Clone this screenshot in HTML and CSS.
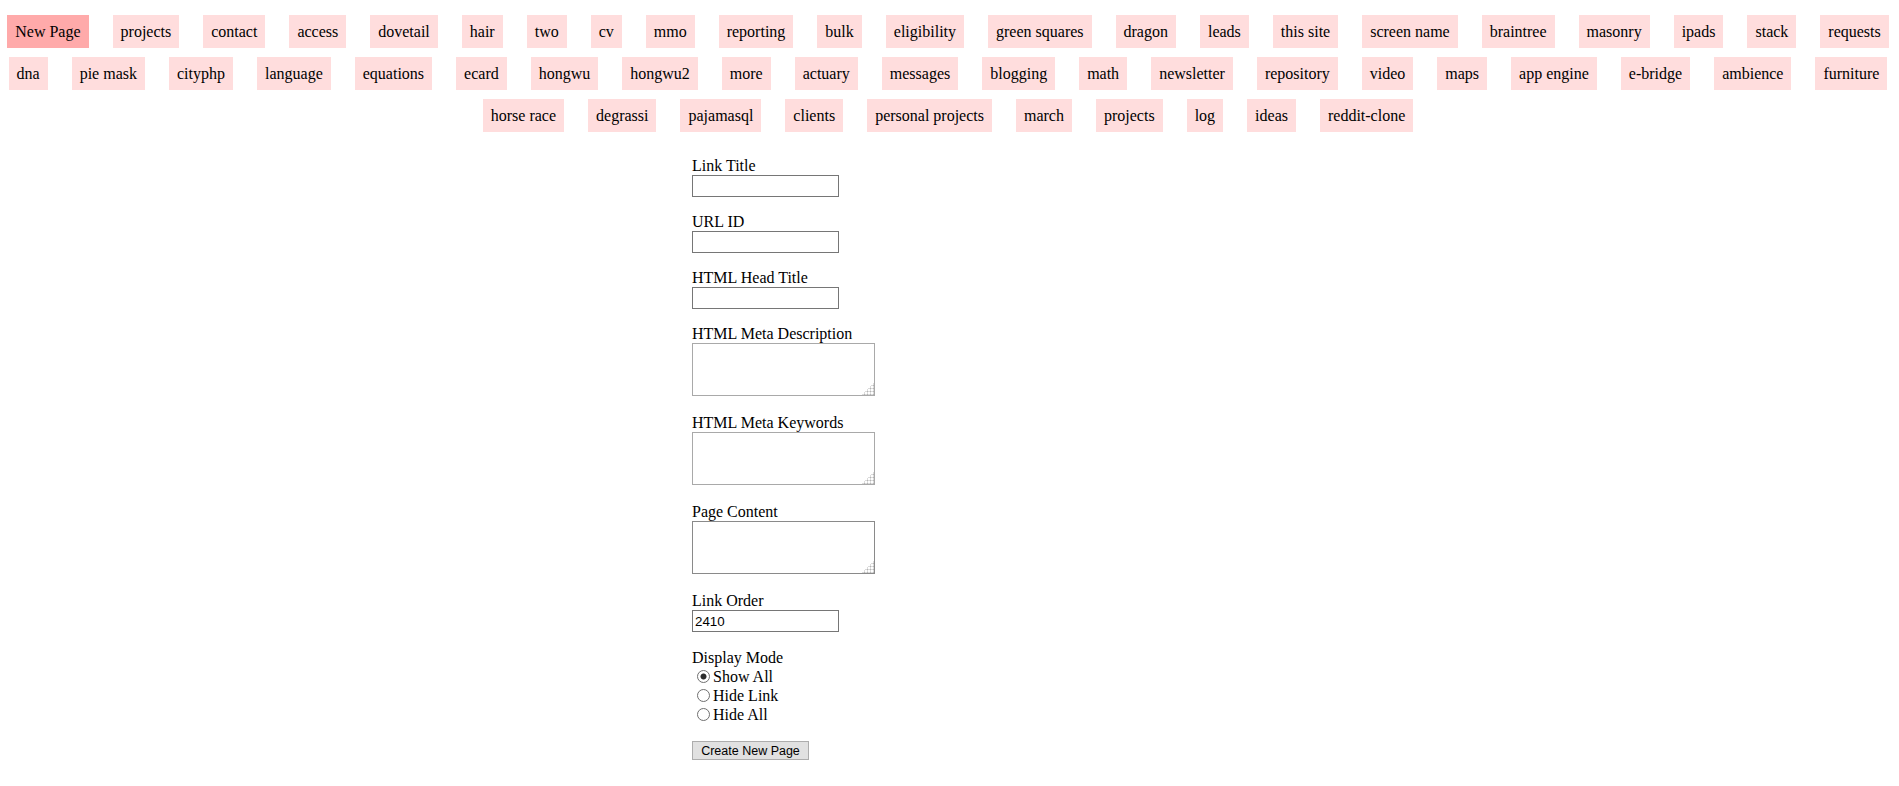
FILE: index.html
```html
<!DOCTYPE html>
<html lang="en">
<head>
    <meta charset="UTF-8">
    <title>New Page</title>
    <link rel="stylesheet" href="styles.css">
</head>
<body>
    <nav class="page-links">
        <a href="#" class="current">New Page</a>
        <a href="#">projects</a>
        <a href="#">contact</a>
        <a href="#">access</a>
        <a href="#">dovetail</a>
        <a href="#">hair</a>
        <a href="#">two</a>
        <a href="#">cv</a>
        <a href="#">mmo</a>
        <a href="#">reporting</a>
        <a href="#">bulk</a>
        <a href="#">eligibility</a>
        <a href="#">green squares</a>
        <a href="#">dragon</a>
        <a href="#">leads</a>
        <a href="#">this site</a>
        <a href="#">screen name</a>
        <a href="#">braintree</a>
        <a href="#">masonry</a>
        <a href="#">ipads</a>
        <a href="#">stack</a>
        <a href="#">requests</a>
        <a href="#">dna</a>
        <a href="#">pie mask</a>
        <a href="#">cityphp</a>
        <a href="#">language</a>
        <a href="#">equations</a>
        <a href="#">ecard</a>
        <a href="#">hongwu</a>
        <a href="#">hongwu2</a>
        <a href="#">more</a>
        <a href="#">actuary</a>
        <a href="#">messages</a>
        <a href="#">blogging</a>
        <a href="#">math</a>
        <a href="#">newsletter</a>
        <a href="#">repository</a>
        <a href="#">video</a>
        <a href="#">maps</a>
        <a href="#">app engine</a>
        <a href="#">e-bridge</a>
        <a href="#">ambience</a>
        <a href="#">furniture</a>
        <a href="#">horse race</a>
        <a href="#">degrassi</a>
        <a href="#">pajamasql</a>
        <a href="#">clients</a>
        <a href="#">personal projects</a>
        <a href="#">march</a>
        <a href="#">projects</a>
        <a href="#">log</a>
        <a href="#">ideas</a>
        <a href="#">reddit-clone</a>
    </nav>

    <form class="page-form">
        <div class="field">
            <label for="linkTitle">Link Title</label>
            <input type="text" id="linkTitle">
        </div>
        <div class="field">
            <label for="urlId">URL ID</label>
            <input type="text" id="urlId">
        </div>
        <div class="field">
            <label for="headTitle">HTML Head Title</label>
            <input type="text" id="headTitle">
        </div>
        <div class="field">
            <label for="metaDesc">HTML Meta Description</label>
            <textarea id="metaDesc" class="meta"></textarea>
        </div>
        <div class="field">
            <label for="metaKeywords">HTML Meta Keywords</label>
            <textarea id="metaKeywords" class="meta"></textarea>
        </div>
        <div class="field">
            <label for="content">Page Content</label>
            <textarea id="content"></textarea>
        </div>
        <div class="field">
            <label for="linkOrder">Link Order</label>
            <input type="text" id="linkOrder" value="2410">
        </div>
        <div class="field">
            <label>Display Mode</label>
            <label class="choice"><input type="radio" name="mode" checked>Show All</label>
            <label class="choice"><input type="radio" name="mode">Hide Link</label>
            <label class="choice"><input type="radio" name="mode">Hide All</label>
        </div>
        <button type="submit">Create New Page</button>
    </form>
</body>
</html>
```

FILE: styles.css
```css
body {
    margin: 0;
    font-family: "Liberation Serif", "Times New Roman", serif;
    font-size: 16px;
    color: #000;
}
.page-links {
    display: flex;
    flex-wrap: wrap;
    justify-content: center;
    gap: 9px 24px;
    padding: 15px 3px 0 0;
}
.page-links a {
    display: block;
    padding: 7px 8px;
    line-height: 19px;
    background-color: #ffdddd;
    color: #000;
    text-decoration: none;
}
.page-links a.current {
    background-color: #ffaaaa;
}
.page-form {
    width: 515px;
    margin: 25px auto 0;
}
.field label {
    display: block;
    line-height: 18px;
}
.field input[type="text"] {
    display: block;
    box-sizing: border-box;
    width: 147px;
    height: 22px;
    margin: 0 0 16px;
    padding: 1px 2px;
    border: 1px solid #767676;
    border-radius: 0;
    font-family: "Liberation Sans", Arial, sans-serif;
    font-size: 13.33px;
}
#linkOrder {
    margin-bottom: 17px;
}
textarea {
    display: block;
    box-sizing: border-box;
    width: 183px;
    height: 53px;
    margin: 0 0 18px;
    border: 1px solid #8a8a8a;
    border-radius: 0;
}
textarea.meta {
    border-color: #a9a9a9;
}
/* dotted grip like the old windows one */
textarea::-webkit-resizer {
    background:
        linear-gradient(135deg, #fff 58%, transparent 58%),
        radial-gradient(circle, #b5b5b5 0.9px, transparent 1.1px) 1px 1px / 3px 3px;
}
.field .choice {
    display: flex;
    align-items: center;
    height: 19px;
    line-height: 19px;
}
.choice input {
    appearance: none;
    width: 13px;
    height: 13px;
    margin: 0 3px 0 5px;
    border: 1px solid #6f6f6f;
    border-radius: 50%;
    background: #fff;
}
.choice input:checked {
    background: radial-gradient(circle, #2b2b2b 0, #2b2b2b 2.6px, #fff 3.4px);
}
button {
    display: block;
    box-sizing: border-box;
    width: 117px;
    height: 19px;
    margin-top: 17px;
    padding: 0 4px;
    border: 1px solid #adadad;
    border-radius: 0;
    background-color: #e1e1e1;
    color: #000;
    font-family: "Liberation Sans", Arial, sans-serif;
    font-size: 12.5px;
}
```
